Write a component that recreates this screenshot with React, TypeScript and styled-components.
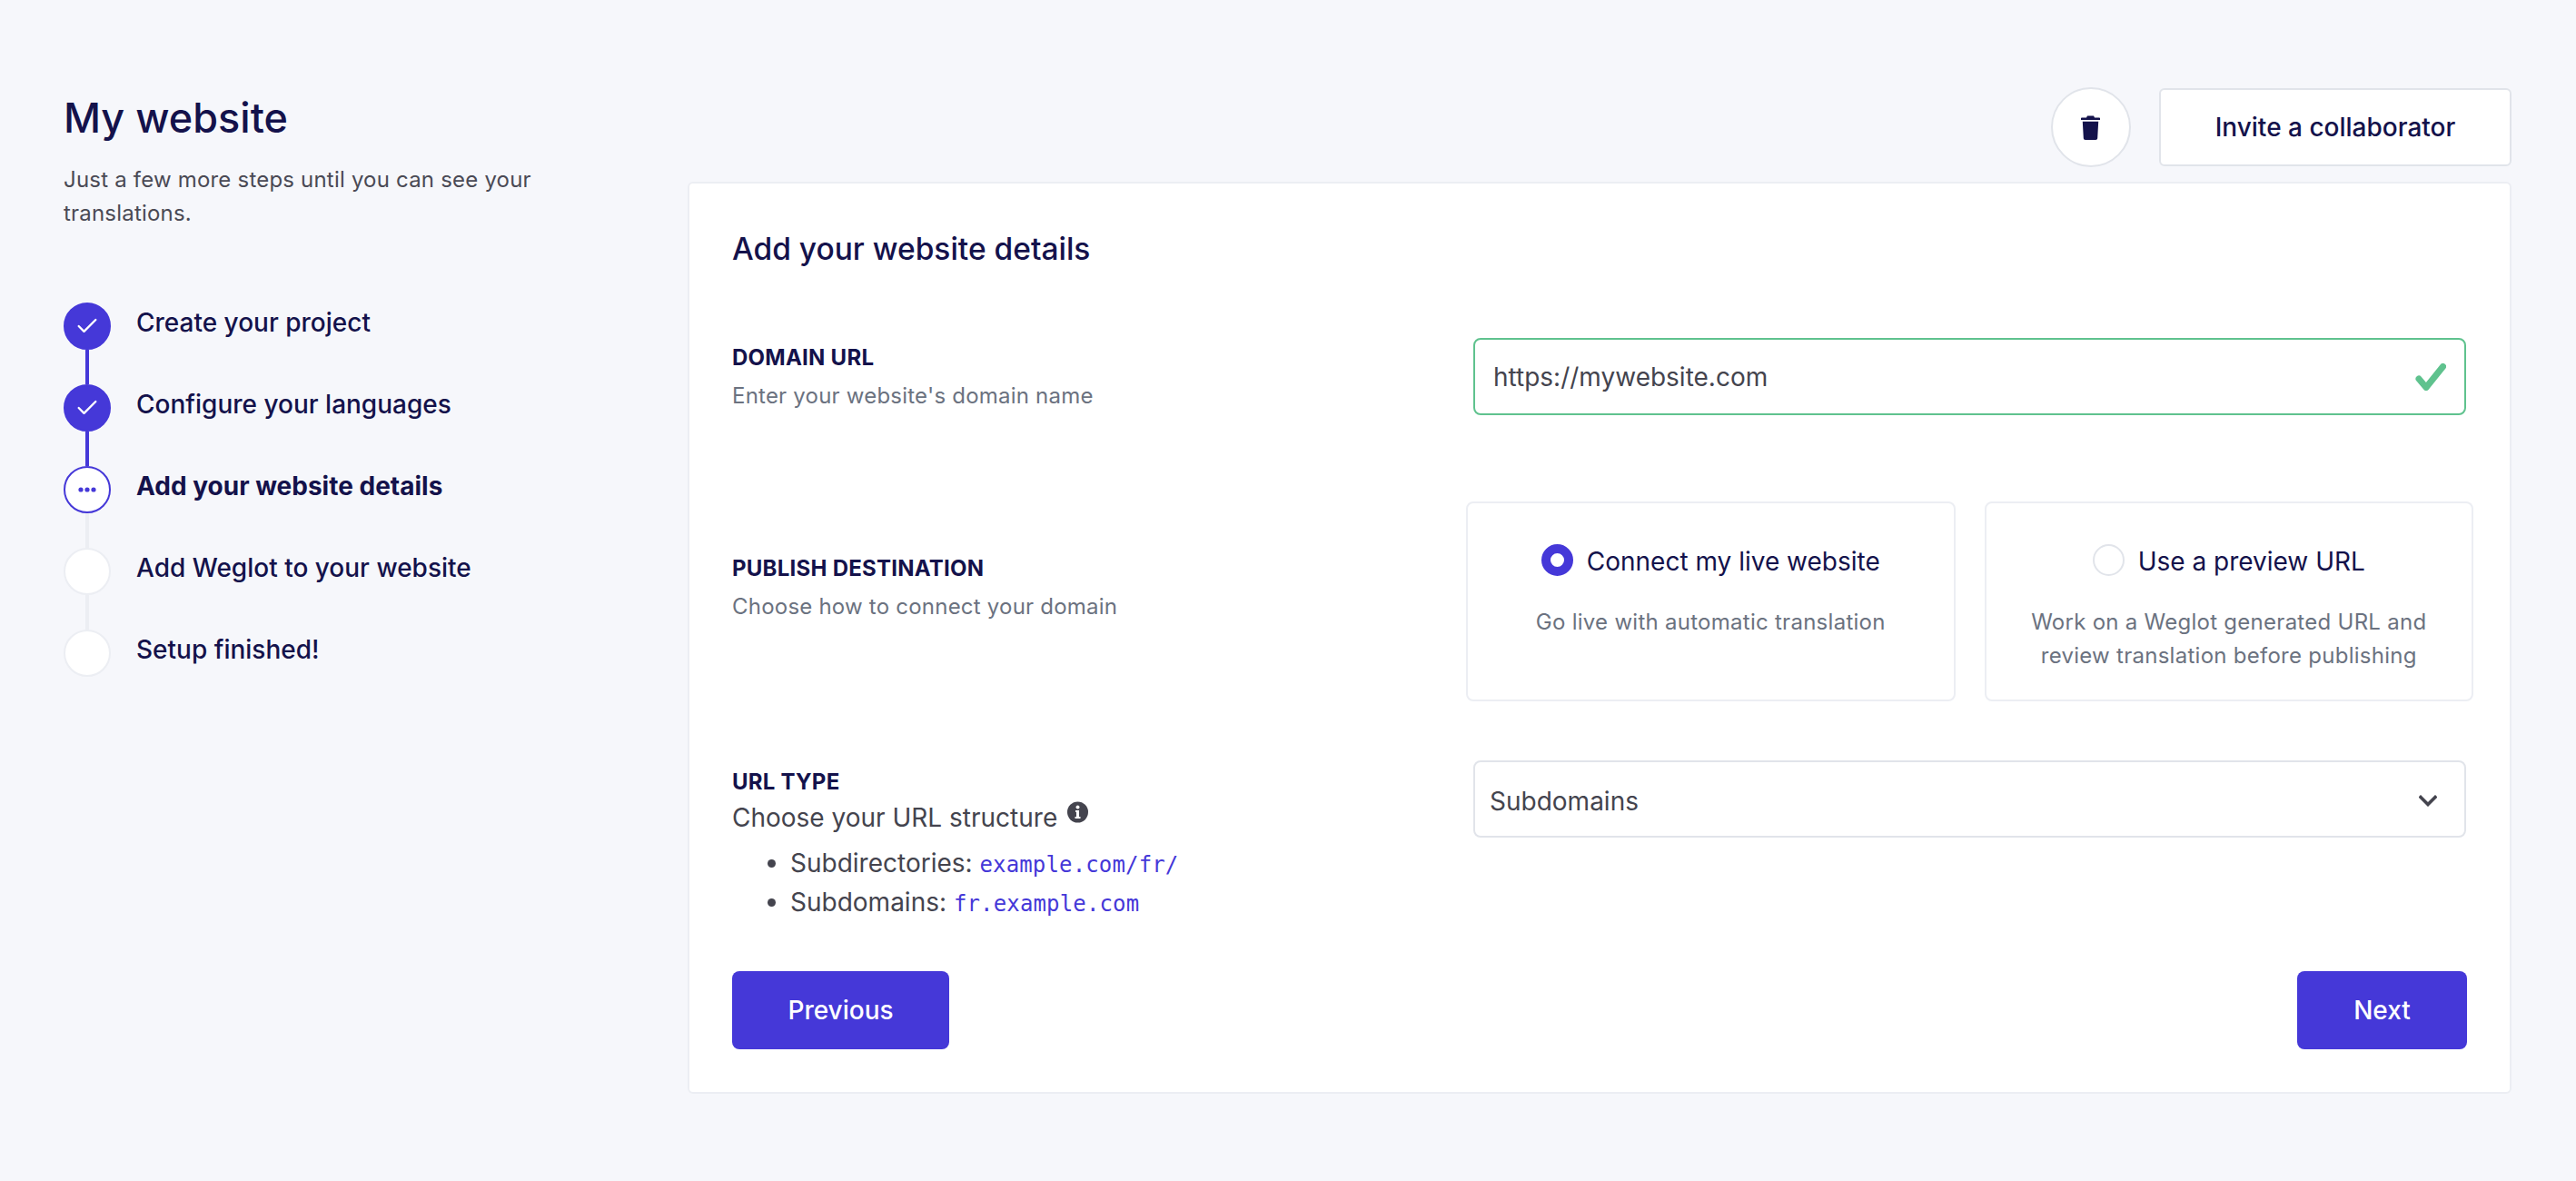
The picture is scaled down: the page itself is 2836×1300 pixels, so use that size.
import React from 'react';
import styled, { createGlobalStyle } from 'styled-components';
import { Check } from 'lucide-react';

const NAVY = '#14124b';
const INDIGO = '#4538d8';
const TEXT = '#44444e';
const MUTED = '#6b7280';
const LINE = '#eceef3';
const FIELD = '#e1e4ea';
const GREEN = '#5fc28e';

const GlobalStyle = createGlobalStyle`
  body {
    margin: 0;
    background: #f6f7fb;
    font-family: Inter, "Liberation Sans", sans-serif;
    color: ${TEXT};
  }
`;

const Page = styled.div`
  display: flex;
  width: 2836px;
  height: 1300px;
  box-sizing: border-box;
  padding: 96px 71px 0 70px;
`;

const Side = styled.aside`
  width: 687px;
  flex: none;
`;

const Title = styled.h1`
  margin: 7px 0 0;
  font-size: 45px;
  line-height: 54px;
  font-weight: 500;
  color: ${NAVY};
`;

const Lead = styled.p`
  margin: 22px 0 0;
  width: 570px;
  font-size: 24px;
  line-height: 37px;
  letter-spacing: 0.2px;
  color: #4a4a55;
`;

const Steps = styled.ol`
  list-style: none;
  margin: 61px 0 0;
  padding: 0;
`;

const Step = styled.li<{ $current?: boolean }>`
  display: flex;
  align-items: center;
  gap: 28px;
  height: 90px;
  font-size: 28px;
  font-weight: ${p => (p.$current ? 700 : 500)};
  color: ${NAVY};
`;

const StepLabel = styled.span`
  padding-bottom: 8px;
`;

const Dot = styled.span<{ $kind: string; $link?: string }>`
  position: relative;
  flex: none;
  width: 52px;
  height: 52px;
  border-radius: 50%;
  box-sizing: border-box;
  display: grid;
  place-items: center;
  background: ${p => (p.$kind === 'done' ? INDIGO : '#fff')};
  border: 2px solid ${p => (p.$kind === 'todo' ? LINE : INDIGO)};
  color: ${p => (p.$kind === 'done' ? '#fff' : INDIGO)};

  &::after {
    content: ${p => (p.$link ? "''" : 'none')};
    position: absolute;
    left: 22px;
    top: 50px;
    width: 4px;
    height: 38px;
    background: ${p => p.$link};
  }
`;

const Main = styled.main`
  flex: 1;
`;

const Actions = styled.div`
  display: flex;
  justify-content: flex-end;
  align-items: flex-start;
  gap: 31px;
  height: 104px;
`;

const RoundButton = styled.button`
  width: 88px;
  height: 88px;
  padding: 0 2px 0 0;
  border-radius: 50%;
  background: #fff;
  border: 2px solid ${FIELD};
  display: grid;
  place-items: center;
`;

const InviteButton = styled.button`
  width: 388px;
  height: 86px;
  margin-top: 1px;
  background: #fff;
  border: 2px solid ${FIELD};
  border-radius: 6px;
  font: 500 28px Inter, "Liberation Sans", sans-serif;
  color: ${NAVY};
`;

const Card = styled.section`
  height: 1004px;
  box-sizing: border-box;
  background: #fff;
  border: 2px solid ${LINE};
  border-radius: 6px;
  padding: 50px 48px 0 47px;
`;

const CardTitle = styled.h2`
  margin: 0 0 76px;
  font-size: 33.5px;
  line-height: 44px;
  font-weight: 500;
  color: ${NAVY};
`;

const Row = styled.div<{ $gap?: number }>`
  display: grid;
  grid-template-columns: 816px 1093px;
  margin-top: ${p => p.$gap ?? 0}px;
`;

const LabelBlock = styled.div<{ $offset: number }>`
  padding-top: ${p => p.$offset}px;
`;

const Label = styled.div`
  font-size: 24px;
  line-height: 36px;
  font-weight: 700;
  letter-spacing: 0.25px;
  color: ${NAVY};
`;

const Hint = styled.div`
  margin-top: 6px;
  font-size: 24px;
  line-height: 36px;
  letter-spacing: 0.22px;
  color: ${MUTED};
`;

const InputBox = styled.div`
  display: flex;
  align-items: center;
  justify-content: space-between;
  height: 85px;
  box-sizing: border-box;
  padding: 0 20px;
  border: 2px solid ${GREEN};
  border-radius: 8px;
  font-size: 28px;
  color: ${TEXT};
`;

const Options = styled.div`
  display: grid;
  grid-template-columns: 1fr 1fr;
  gap: 32px;
  margin: 0 -8px;
`;

const Option = styled.div`
  height: 220px;
  box-sizing: border-box;
  padding: 45px 30px 0;
  border: 2px solid ${LINE};
  border-radius: 8px;
  text-align: center;
`;

const OptionHead = styled.div`
  display: flex;
  align-items: center;
  justify-content: center;
  gap: 15px;
  font-size: 28px;
  line-height: 36px;
  color: ${NAVY};
`;

const Radio = styled.span<{ $on?: boolean }>`
  flex: none;
  width: 35px;
  height: 35px;
  box-sizing: border-box;
  border-radius: 50%;
  margin-bottom: 2px;
  background: #fff;
  border: ${p => (p.$on ? `10px solid ${INDIGO}` : `2px solid ${FIELD}`)};
`;

const OptionText = styled.p`
  margin: 30px 0 0;
  font-size: 24px;
  line-height: 37px;
  letter-spacing: 0.27px;
  color: ${MUTED};
`;

const Select = styled.div`
  display: flex;
  align-items: center;
  justify-content: space-between;
  height: 85px;
  box-sizing: border-box;
  padding: 4px 30px 0 16px;
  border: 2px solid ${FIELD};
  border-radius: 8px;
  font-size: 28px;
  color: ${TEXT};
`;

const Structure = styled.div`
  display: flex;
  align-items: flex-start;
  gap: 11px;
  font-size: 28px;
  line-height: 42px;
  color: ${TEXT};
`;

const Bullets = styled.ul`
  margin: 8px 0 0;
  padding: 0 0 0 64px;
  font-size: 28px;
  line-height: 43px;
  color: ${TEXT};
`;

const Code = styled.code`
  font-family: "DejaVu Sans Mono", "Liberation Mono", monospace;
  font-size: 24px;
  line-height: 1;
  letter-spacing: 0.15px;
  color: ${INDIGO};
`;

const Footer = styled.div`
  display: flex;
  justify-content: space-between;
  margin: 54px -1px 0 0;
`;

const PrimaryButton = styled.button<{ $width: number }>`
  width: ${p => p.$width}px;
  height: 86px;
  border: 0;
  border-radius: 8px;
  background: ${INDIGO};
  color: #fff;
  font: 500 28px Inter, "Liberation Sans", sans-serif;
`;

const TrashIcon = () => (
  <svg width="21" height="27" viewBox="0 0 21 27" fill={NAVY}>
    <path d="M7 0.5h7l1 2h5.2c.4 0 .8.4.8.8V5H0V3.3c0-.4.4-.8.8-.8H6z" />
    <path d="M1.8 6.8h17.4l-1 18.2c0 1.1-.9 2-2 2H4.8c-1.1 0-2-.9-2-2z" />
  </svg>
);

const GreenCheck = () => (
  <svg width="34" height="30" viewBox="0 0 34 30" fill="none">
    <path d="M4 17 12 26.5 30.5 3.5" stroke={GREEN} strokeWidth="7" strokeLinecap="round" strokeLinejoin="round" />
  </svg>
);

const InfoIcon = () => (
  <svg width="23" height="24" viewBox="0 0 23 24" style={{ marginTop: 3 }}>
    <circle cx="11.5" cy="12" r="11.5" fill={TEXT} />
    <circle cx="11.5" cy="6.5" r="2" fill="#fff" />
    <path d="M9 10h4v7h1.5v2h-6v-2H10v-5H9z" fill="#fff" />
  </svg>
);

const DotsIcon = () => (
  <svg width="20" height="6" viewBox="0 0 20 6" fill={INDIGO}>
    <circle cx="3" cy="3" r="2.6" />
    <circle cx="10" cy="3" r="2.6" />
    <circle cx="17" cy="3" r="2.6" />
  </svg>
);

const ChevronIcon = () => (
  <svg width="20" height="13" viewBox="0 0 20 13" fill="none">
    <path d="M2 2.5 10 10.5 18 2.5" stroke={TEXT} strokeWidth="3.6" strokeLinecap="square" />
  </svg>
);

const steps = [
  { kind: 'done', label: 'Create your project', link: INDIGO },
  { kind: 'done', label: 'Configure your languages', link: INDIGO },
  { kind: 'current', label: 'Add your website details', link: LINE },
  { kind: 'todo', label: 'Add Weglot to your website', link: LINE },
  { kind: 'todo', label: 'Setup finished!' },
];

export default function App() {
  return (
    <>
      <GlobalStyle />
      <Page>
        <Side>
          <Title>My website</Title>
          <Lead>Just a few more steps until you can see your translations.</Lead>
          <Steps>
            {steps.map(step => (
              <Step key={step.label} $current={step.kind === 'current'}>
                <Dot $kind={step.kind} $link={step.link}>
                  {step.kind === 'done' && <Check size={28} strokeWidth={2} />}
                  {step.kind === 'current' && <DotsIcon />}
                </Dot>
                <StepLabel>{step.label}</StepLabel>
              </Step>
            ))}
          </Steps>
        </Side>
        <Main>
          <Actions>
            <RoundButton>
              <TrashIcon />
            </RoundButton>
            <InviteButton>Invite a collaborator</InviteButton>
          </Actions>
          <Card>
            <CardTitle>Add your website details</CardTitle>
            <Row>
              <LabelBlock $offset={4}>
                <Label>DOMAIN URL</Label>
                <Hint>Enter your website's domain name</Hint>
              </LabelBlock>
              <InputBox>
                https://mywebsite.com
                <GreenCheck />
              </InputBox>
            </Row>
            <Row $gap={95}>
              <LabelBlock $offset={56}>
                <Label>PUBLISH DESTINATION</Label>
                <Hint>Choose how to connect your domain</Hint>
              </LabelBlock>
              <Options>
                <Option>
                  <OptionHead>
                    <Radio $on />
                    Connect my live website
                  </OptionHead>
                  <OptionText>Go live with automatic translation</OptionText>
                </Option>
                <Option>
                  <OptionHead>
                    <Radio />
                    Use a preview URL
                  </OptionHead>
                  <OptionText>Work on a Weglot generated URL and review translation before publishing</OptionText>
                </Option>
              </Options>
            </Row>
            <Row $gap={65}>
              <LabelBlock $offset={6}>
                <Label>URL TYPE</Label>
                <Structure>
                  Choose your URL structure
                  <InfoIcon />
                </Structure>
                <Bullets>
                  <li>
                    Subdirectories: <Code>example.com/fr/</Code>
                  </li>
                  <li>
                    Subdomains: <Code>fr.example.com</Code>
                  </li>
                </Bullets>
              </LabelBlock>
              <Select>
                Subdomains
                <ChevronIcon />
              </Select>
            </Row>
            <Footer>
              <PrimaryButton $width={239}>Previous</PrimaryButton>
              <PrimaryButton $width={187}>Next</PrimaryButton>
            </Footer>
          </Card>
        </Main>
      </Page>
    </>
  );
}
